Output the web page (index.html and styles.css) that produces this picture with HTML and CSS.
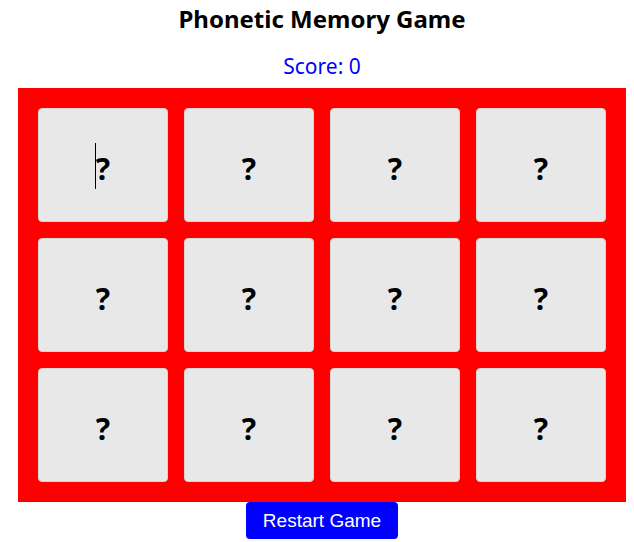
FILE: index.html
```html
<!DOCTYPE html>
<html>
<head>
<meta charset="utf-8">
<link rel="stylesheet" href="styles.css">
</head>
<body>
<div class="app">
  <h2 class="title">Phonetic Memory Game</h2>
  <p class="score">Score: 0</p>
  <div class="board">
    <div class="card"><span class="mark caret">?</span></div>
    <div class="card"><span class="mark">?</span></div>
    <div class="card"><span class="mark">?</span></div>
    <div class="card"><span class="mark">?</span></div>
    <div class="card"><span class="mark">?</span></div>
    <div class="card"><span class="mark">?</span></div>
    <div class="card"><span class="mark">?</span></div>
    <div class="card"><span class="mark">?</span></div>
    <div class="card"><span class="mark">?</span></div>
    <div class="card"><span class="mark">?</span></div>
    <div class="card"><span class="mark">?</span></div>
    <div class="card"><span class="mark">?</span></div>
  </div>
  <button class="restart">Restart Game</button>
</div>
</body>
</html>
```
FILE: styles.css
```css
html, body {
  margin: 0;
  padding: 0;
  background: #fff;
}
body {
  padding-left: 10px;
  font-family: "Noto Sans", "Open Sans", sans-serif;
}
.app {
  display: flex;
  flex-direction: column;
  align-items: center;
}
.title {
  margin: 4px 0 0;
  font-size: 24px;
  font-weight: 700;
  line-height: 30px;
  color: #000;
}
.score {
  margin: 19px 0 0;
  font-size: 21px;
  line-height: 26px;
  color: #0000ff;
}
.board {
  margin-top: 9px;
  background: #ff0000;
  padding: 20px;
  display: grid;
  grid-template-columns: repeat(4, 130px);
  grid-auto-rows: 114px;
  gap: 16px;
}
.card {
  box-sizing: border-box;
  background: #e8e8e8;
  border: 1px solid #d4d4d4;
  border-radius: 4px;
  padding-top: 7px;
  display: flex;
  align-items: center;
  justify-content: center;
}
.mark {
  position: relative;
  font-size: 30px;
  font-weight: 700;
  color: #000;
  line-height: 40px;
}
.caret::before {
  content: "";
  position: absolute;
  left: -1px;
  top: -6px;
  width: 1px;
  height: 46px;
  background: #000;
}
.restart {
  margin: 0;
  width: 152px;
  height: 37px;
  border: none;
  border-radius: 4px;
  background: #0000ff;
  color: #fff;
  font-family: "Liberation Sans", Arial, sans-serif;
  font-size: 19px;
  padding: 0;
}
```
